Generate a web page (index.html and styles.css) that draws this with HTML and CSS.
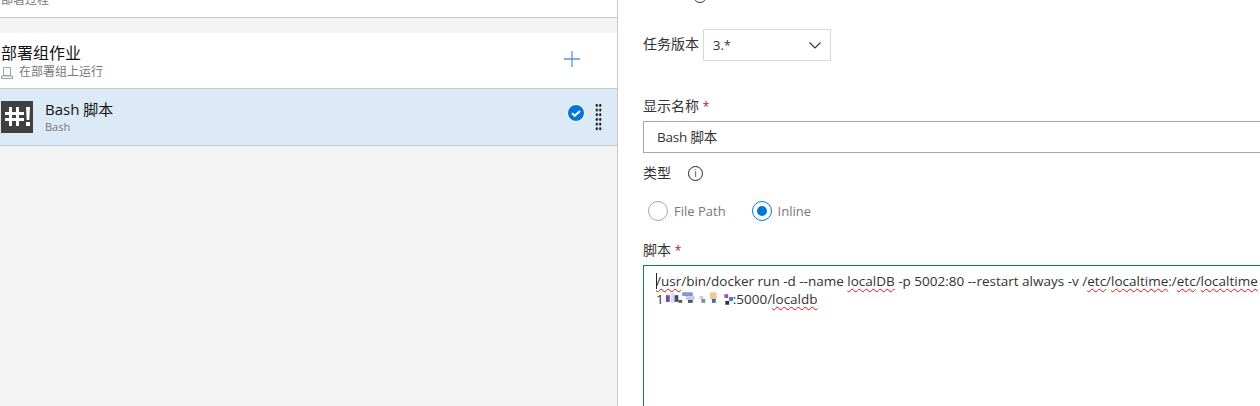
FILE: index.html
```html
<!DOCTYPE html>
<html lang="zh">
<head>
<meta charset="utf-8">
<title>Bash 脚本</title>
<link rel="stylesheet" href="styles.css">
</head>
<body>
<div class="page">
  <aside class="left">
    <div class="stage"><span class="stage-name">部署过程</span></div>
    <div class="job">
      <div class="job-text">
        <div class="job-title">部署组作业</div>
        <div class="job-sub">
          <svg class="job-icon" width="12" height="13" viewBox="0 0 12 13"><path d="M2.500 1.500h7v8h-7zM.5 12.500V10h11v2.500z" fill="none" stroke="#9a9fa8"/></svg>
          <span>在部署组上运行</span>
        </div>
      </div>
      <svg class="plus" width="16" height="16" viewBox="0 0 16 16"><path d="M8 0v16M0 8h16" stroke="#5b96d6" stroke-width="1.300"/></svg>
    </div>
    <div class="task">
      <div class="task-logo">
        <svg width="32" height="32" viewBox="0 0 32 32"><rect width="32" height="32" fill="#404040"/><path d="M8 6h3v5h4V6h3v5h5v3h-5v3h5v3h-5v5h-3v-5h-4v5H8v-5H4v-3h4v-3H4v-3h4zm3 8v3h4v-3z" fill="#fff"/><path d="M25 6h4l-.7 13h-2.600zM25 21h4v4h-4z" fill="#fff"/></svg>
      </div>
      <div class="task-text">
        <div class="task-title">Bash 脚本</div>
        <div class="task-sub">Bash</div>
      </div>
      <svg class="check" width="18" height="18" viewBox="0 0 18 18"><circle cx="9" cy="9" r="8.500" fill="#0078d4" stroke="#fff"/><path d="M5 9.300l2.700 2.500L13 7" fill="none" stroke="#fff" stroke-width="2"/></svg>
      <div class="grip"></div>
    </div>
  </aside>
  <main class="right">
    <div class="cut-label"><span class="cut-text">Bash *</span><span class="cut-info"></span></div>
    <div class="version-row">
      <label class="label version-label">任务版本</label>
      <div class="select">
        <span>3.*</span>
        <svg width="12" height="7" viewBox="0 0 12 7"><path d="M.5.500L6 6l5.500-5.500" fill="none" stroke="#333" stroke-width="1.100"/></svg>
      </div>
    </div>
    <label class="label name-label">显示名称 <b class="req">*</b></label>
    <div class="input">Bash 脚本</div>
    <div class="type-row">
      <span class="label">类型</span>
      <span class="info">i</span>
    </div>
    <div class="radios">
      <span class="radio"></span><span class="radio-text">File Path</span>
      <span class="radio on"></span><span class="radio-text">Inline</span>
    </div>
    <label class="label script-label">脚本 <b class="req">*</b></label>
    <div class="script">
      <div class="line"><span class="caret"></span><span class="sp">/usr</span>/bin/docker run -d --name <span class="sp">localDB</span> -p 5002:80 --restart always -v /<span class="sp">etc</span>/<span class="sp">localtime</span>:/<span class="sp">etc</span>/<span class="sp">localtime</span></div>
      <div class="line">1<svg class="mosaic" width="69" height="14" viewBox="0 0 72 14"><rect x="2" y="3" width="4" height="7" fill="#7a4a9a"/><rect x="7" y="1" width="4" height="10" fill="#d9dde8"/><rect x="11" y="3" width="4" height="7" fill="#4a4a7a"/><rect x="15" y="8" width="4" height="3" fill="#555"/><rect x="19" y="0" width="11" height="4" fill="#8f8fd0"/><rect x="23" y="4" width="9" height="4" fill="#b8d0f0"/><rect x="25" y="8" width="5" height="3" fill="#555"/><rect x="37" y="4" width="4" height="3" fill="#ccc"/><rect x="39" y="7" width="4" height="4" fill="#888"/><rect x="48" y="0" width="7" height="7" fill="#f0c890"/><rect x="50" y="7" width="4" height="4" fill="#3a6ab0"/><rect x="63" y="2" width="4" height="4" fill="#a050a0"/><rect x="64" y="9" width="4" height="4" fill="#333"/><rect x="68" y="5" width="4" height="4" fill="#3a78c8"/></svg>:5000/<span class="sp">localdb</span></div>
    </div>
  </main>
</div>
</body>
</html>
```
FILE: styles.css
```css
* { box-sizing: border-box; }
html, body { margin: 0; padding: 0; height: 100%; overflow: hidden; background: #fff; }
body { font-family: "Open Sans", "Noto Sans CJK SC", sans-serif; color: #333; }
.page { display: flex; width: 1260px; height: 406px; overflow: hidden; }

.left { width: 618px; flex: none; height: 100%; background: #f4f4f4; border-right: 1px solid #c8c8c8; }
.stage { height: 18px; background: #fff; border-bottom: 1px solid #c8c8c8; overflow: hidden; }
.stage-name { display: block; margin-top: -9px; padding-left: 1px; font-size: 12px; line-height: 18px; color: #777; }
.job { height: 55px; margin-top: 15px; background: #fff; display: flex; align-items: center; justify-content: space-between; padding: 0 37px 0 1px; }
.job-title { font-size: 16px; line-height: 22px; color: #111; }
.job-sub { display: flex; align-items: center; gap: 6px; margin-top: 1px; font-size: 12px; line-height: 14px; color: #777; }
.job-icon { flex: none; }
.plus { flex: none; margin-top: -3px; }
.task { height: 58px; background: #dce9f7; border-top: 1px solid #c8c8c8; border-bottom: 1px solid #c8c8c8; display: flex; align-items: center; padding: 0 15px 0 1px; }
.task-logo { width: 32px; height: 32px; flex: none; margin-right: 12px; }
.task-logo svg { display: block; }
.task-text { flex: 1; }
.task-title { font-size: 15px; line-height: 20px; color: #111; }
.task-sub { font-size: 11px; line-height: 16px; color: #777; }
.check { flex: none; margin-right: 10px; margin-top: -8px; }
.grip { width: 7px; height: 28px; flex: none; background-image: radial-gradient(circle, #222 1.200px, transparent 1.400px); background-size: 3.500px 4.700px; }

.right { flex: 1; min-width: 0; padding: 0 0 0 25px; overflow: hidden; }
.cut-label { height: 0; display: flex; align-items: flex-start; font-size: 13px; line-height: 18px; }
.cut-text { margin-top: -16px; width: 50px; color: #555; }
.cut-info { width: 14px; height: 14px; margin-top: -11px; border: 1px solid #333; border-radius: 50%; }
.label { font-size: 14px; line-height: 18px; color: #333; }
.req { font-weight: 400; font-size: 12px; line-height: 1; color: #a4262c; }
.version-row { display: flex; align-items: flex-start; gap: 4px; padding-top: 29px; }
.version-label { margin-top: 6px; }
.select { width: 128px; height: 32px; border: 1px solid #d8d8d8; display: flex; align-items: center; justify-content: space-between; padding: 0 9px 0 9px; font-size: 13px; color: #333; }
.name-label { display: block; height: 18px; margin-top: 36px; }
.input { width: 640px; height: 32px; margin-top: 6px; border: 1px solid #a6a6a6; padding-left: 13px; font-size: 13.500px; letter-spacing: -0.2px; line-height: 30px; color: #333; }
.type-row { display: flex; align-items: center; gap: 17px; margin-top: 11px; height: 18px; }
.info { width: 15px; height: 15px; border: 1px solid #222; border-radius: 50%; font-size: 10px; line-height: 13px; text-align: center; color: #68217a; }
.radios { display: flex; align-items: center; margin-top: 18px; height: 22px; padding-left: 5px; }
.radio { width: 20px; height: 20px; flex: none; border: 1px solid #a6a6a6; border-radius: 50%; margin-right: 6px; position: relative; }
.radio.on { border-color: #0078d4; }
.radio.on::after { content: ""; position: absolute; left: 4px; top: 4px; width: 10px; height: 10px; border-radius: 50%; background: #0078d4; }
.radio-text { font-size: 13px; color: #777; margin-right: 26px; }
.script-label { display: block; height: 18px; margin-top: 19px; }
.script { width: 640px; height: 150px; margin-top: 6px; border: 1px solid #106ebe; border-width: 1px 0 0 1px; padding: 6px 0 0 12px; font-size: 13.500px; line-height: 18px; color: #333; }
.line { white-space: nowrap; position: relative; }
.caret { display: inline-block; width: 1px; height: 16px; background: #222; vertical-align: -3px; margin-right: -1px; }
.sp { text-decoration: underline wavy #e01010 1px; text-underline-offset: 2px; }
.mosaic { vertical-align: -2px; }
```
